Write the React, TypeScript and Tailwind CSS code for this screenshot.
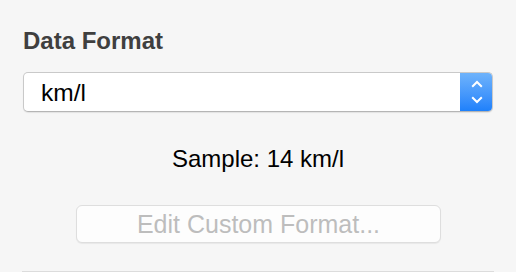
const font = { fontFamily: '"Liberation Sans", Arial, sans-serif' };

function Stepper() {
  return (
    <div className="flex h-full w-[33px] flex-col items-center justify-center gap-[8px] rounded-r-[5px] bg-gradient-to-b from-[#70b4fb] to-[#1a7ffb]">
      <svg width="12" height="8" viewBox="0 0 12 8" fill="none">
        <path d="M1.2 6.8 L6 2 L10.8 6.8" stroke="white" strokeWidth="2" />
      </svg>
      <svg width="12" height="8" viewBox="0 0 12 8" fill="none">
        <path d="M1.2 1.2 L6 6 L10.8 1.2" stroke="white" strokeWidth="2" />
      </svg>
    </div>
  );
}

export default function App() {
  return (
    <div className="h-[272px] w-[516px] overflow-hidden bg-[#f6f6f6]" style={font}>
      <div className="flex flex-col px-[22px] pt-[27px]">
        <h2 className="ml-px text-[24px] leading-7 font-bold text-[#3f3f3f]">Data Format</h2>

        <div className="mt-[17px] ml-px mr-[1px] flex h-10 items-stretch overflow-hidden rounded-[5px] border border-[#c9c9c9] border-b-[#b5b5b5] bg-white shadow-[0_1px_1px_rgba(0,0,0,0.08)]">
          <span className="flex-1 pl-[17px] pt-[6px] text-[24.5px] leading-7 text-black">km/l</span>
          <div className="-my-px -mr-px">
            <Stepper />
          </div>
        </div>

        <p className="mt-[33px] text-center text-[24px] leading-7 text-black">Sample: 14 km/l</p>

        <div className="mt-[32px] flex justify-center">
          <button
            disabled
            className="ml-[1px] h-[38px] w-[365px] rounded-[6px] border border-[#dedede] bg-[#fdfdfd] text-[25px] leading-7 text-[#bdbdbd] shadow-[0_1px_1px_rgba(0,0,0,0.06)]"
            style={font}
          >
            Edit Custom Format...
          </button>
        </div>

        <div className="mt-[28px] h-[3px] bg-[#dcdcdc]" />
      </div>
    </div>
  );
}
